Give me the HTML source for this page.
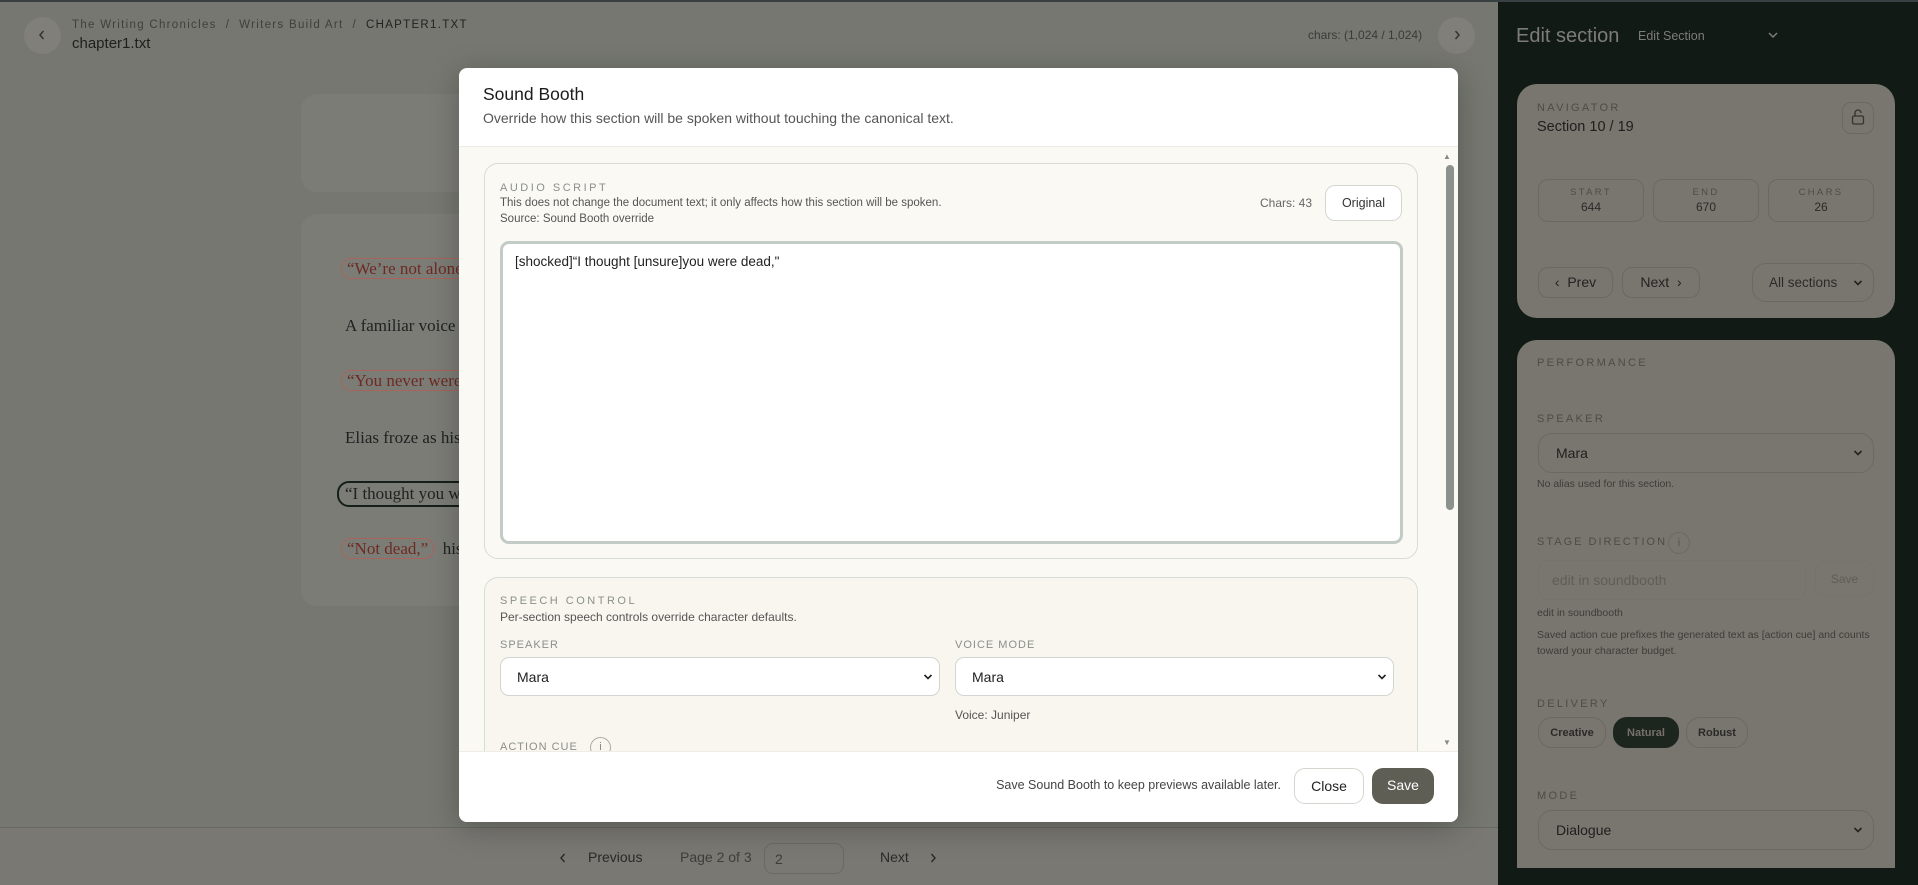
<!DOCTYPE html>
<html><head><meta charset="utf-8"><style>
*{box-sizing:border-box;margin:0;padding:0}
body{width:1918px;height:885px;overflow:hidden;background:#757770;font-family:"Liberation Sans",sans-serif;position:relative;color:#222}
.a{position:absolute;white-space:nowrap}
.lbl{font-size:11px;letter-spacing:2.5px;color:#8a8f8c;text-transform:uppercase}
.sl{font-size:11px;letter-spacing:2.3px;color:#4e4c48;text-transform:uppercase}
.serif{font-family:"Liberation Serif",serif;font-size:17px;color:#1e211f}
.pill{border:1px solid #a8645a;border-radius:10px;padding:0 5px;color:#6e2a22}
.sbox{border:1px solid #6b6963;border-radius:10px;text-align:center}
.sel{border:1px solid #6b6963;border-radius:14px}
.chev{position:absolute;right:10px;top:50%;margin-top:-4px}
</style></head><body>
<div class="a" style="left:0;top:0;width:1918px;height:2px;background:#394041"></div>
<div class="a" style="left:24px;top:17px;width:37px;height:37px;border-radius:50%;background:#807f79"></div>
<svg class="a" style="left:37px;top:29px" width="10" height="12" viewBox="0 0 10 12"><path d="M6.5 2L3 6l3.5 4" fill="none" stroke="#333" stroke-width="1.5"/></svg>
<div class="a" style="left:72px;top:19px;font-size:11.5px;letter-spacing:1.3px;color:#3e403c">The Writing Chronicles &nbsp;/ &nbsp;Writers Build Art &nbsp;/ &nbsp;<span style="color:#222">CHAPTER1.TXT</span></div>
<div class="a" style="left:72px;top:35px;font-size:15px;color:#1e1f1c">chapter1.txt</div>
<div class="a" style="left:1308px;top:28px;font-size:12px;color:#3a3b38">chars: (1,024 / 1,024)</div>
<div class="a" style="left:1438px;top:17px;width:37px;height:37px;border-radius:50%;background:#807f79"></div>
<svg class="a" style="left:1452px;top:29px" width="10" height="12" viewBox="0 0 10 12"><path d="M3.5 2L7 6l-3.5 4" fill="none" stroke="#333" stroke-width="1.5"/></svg>
<div class="a" style="left:301px;top:94px;width:600px;height:98px;border-radius:16px;background:#7c7c77"></div>
<div class="a" style="left:301px;top:214px;width:600px;height:392px;border-radius:16px;background:#7c7c77"></div>
<div class="a serif" style="left:341px;top:259px"><span class="pill">“We’re not alone,</span></div>
<div class="a serif" style="left:345px;top:316px">A familiar voice a</div>
<div class="a serif" style="left:341px;top:371px"><span class="pill">“You never were.</span></div>
<div class="a serif" style="left:345px;top:428px">Elias froze as his</div>
<div class="a serif" style="left:337px;top:481px;border:2px solid #15201a;border-radius:12px;padding:1px 6px">“I thought you we</div>
<div class="a serif" style="left:341px;top:539px"><span class="pill">“Not dead,”</span>&nbsp; his</div>
<div class="a" style="left:0;top:827px;width:1498px;height:58px;background:#7a7873;border-top:1px solid #676962"></div>
<svg class="a" style="left:558px;top:852px" width="10" height="12" viewBox="0 0 10 12"><path d="M6.5 2L3 6l3.5 4" fill="none" stroke="#2a2a28" stroke-width="1.4"/></svg>
<div class="a" style="left:588px;top:849px;font-size:14px;color:#2a2a28">Previous</div>
<div class="a" style="left:680px;top:849px;font-size:14px;color:#3d3d3a">Page 2 of 3</div>
<div class="a" style="left:764px;top:843px;width:80px;height:31px;border:1px solid #6b6963;border-radius:9px;padding:7px 10px;font-size:14px;color:#3d3d3a">2</div>
<div class="a" style="left:880px;top:849px;font-size:14px;color:#2a2a28">Next</div>
<svg class="a" style="left:928px;top:852px" width="10" height="12" viewBox="0 0 10 12"><path d="M3.5 2L7 6l-3.5 4" fill="none" stroke="#2a2a28" stroke-width="1.4"/></svg>
<!-- sidebar -->
<div class="a" style="left:1498px;top:2px;width:420px;height:883px;background:#111a14"></div>
<div class="a" style="left:1516px;top:25px;font-size:20px;color:#7d7c77">Edit section</div>
<div class="a" style="left:1638px;top:29px;font-size:12.5px;color:#7d7c77">Edit Section</div>
<svg class="a" style="left:1767px;top:31px" width="12" height="8" viewBox="0 0 12 8"><path d="M2 2l4 4 4-4" fill="none" stroke="#7d7c77" stroke-width="1.5"/></svg>
<div class="a" style="left:1517px;top:84px;width:378px;height:234px;border-radius:20px;background:#797670"></div>
<div class="a sl" style="left:1537px;top:102px">Navigator</div>
<div class="a" style="left:1537px;top:119px;font-size:14.5px;color:#1e1e1c">Section 10 / 19</div>
<div class="a" style="left:1842px;top:102px;width:32px;height:32px;border:1px solid #6b6963;border-radius:9px"></div>
<svg class="a" style="left:1850px;top:108px" width="16" height="18" viewBox="0 0 16 18"><rect x="2.5" y="8" width="11" height="8" rx="1.5" fill="none" stroke="#333" stroke-width="1.3"/><path d="M5 8V5a3 3 0 0 1 6 0" fill="none" stroke="#333" stroke-width="1.3"/></svg>
<div class="a sbox" style="left:1538px;top:179px;width:106px;height:43px"><div class="sl" style="font-size:9.5px;margin-top:7px">Start</div><div style="font-size:12px;color:#2a2a28;margin-top:2px">644</div></div>
<div class="a sbox" style="left:1653px;top:179px;width:106px;height:43px"><div class="sl" style="font-size:9.5px;margin-top:7px">End</div><div style="font-size:12px;color:#2a2a28;margin-top:2px">670</div></div>
<div class="a sbox" style="left:1768px;top:179px;width:106px;height:43px"><div class="sl" style="font-size:9.5px;margin-top:7px">Chars</div><div style="font-size:12px;color:#2a2a28;margin-top:2px">26</div></div>
<div class="a sbox" style="left:1538px;top:267px;width:75px;height:31px;font-size:14px;padding-top:6px;color:#222">‹ &nbsp;Prev</div>
<div class="a sbox" style="left:1622px;top:267px;width:78px;height:31px;font-size:14px;padding-top:6px;color:#222">Next &nbsp;›</div>
<div class="a sel" style="left:1752px;top:263px;width:122px;height:39px;font-size:13.5px;padding:11px 0 0 16px;color:#2a2a28">All sections<svg class="chev" width="10" height="8" viewBox="0 0 10 8"><path d="M1.5 2l3.5 3.5L8.5 2" fill="none" stroke="#222" stroke-width="1.6"/></svg></div>
<div class="a" style="left:1517px;top:340px;width:378px;height:528px;border-radius:20px 20px 0 0;background:#797670"></div>
<div class="a sl" style="left:1537px;top:357px">Performance</div>
<div class="a sl" style="left:1537px;top:413px">Speaker</div>
<div class="a sel" style="left:1538px;top:433px;width:336px;height:40px;font-size:14px;padding:11px 0 0 17px;color:#1e1e1c">Mara<svg class="chev" width="10" height="8" viewBox="0 0 10 8"><path d="M1.5 2l3.5 3.5L8.5 2" fill="none" stroke="#222" stroke-width="1.6"/></svg></div>
<div class="a" style="left:1537px;top:478px;font-size:10.5px;color:#3d3c39">No alias used for this section.</div>
<div class="a sl" style="left:1537px;top:536px;letter-spacing:2px">Stage Direction</div>
<div class="a" style="left:1668px;top:532px;width:22px;height:22px;border:1px solid #6b6963;border-radius:50%;font-size:11px;text-align:center;line-height:20px;color:#555">i</div>
<div class="a" style="left:1538px;top:560px;width:268px;height:40px;border:1px solid #75736d;border-radius:10px;font-size:14px;padding:11px 13px;color:#5f5d58">edit in soundbooth</div>
<div class="a" style="left:1815px;top:561px;width:59px;height:35px;border:1px solid #75736d;border-radius:10px;font-size:12px;text-align:center;padding-top:10px;color:#5f5d58">Save</div>
<div class="a" style="left:1537px;top:607px;font-size:10.5px;color:#3d3c39">edit in soundbooth</div>
<div class="a" style="left:1537px;top:627px;font-size:10.5px;line-height:16px;color:#3d3c39;width:340px;white-space:normal">Saved action cue prefixes the generated text as [action cue] and counts toward your character budget.</div>
<div class="a sl" style="left:1537px;top:698px">Delivery</div>
<div class="a sbox" style="left:1538px;top:717px;width:68px;height:31px;border-radius:14px;font-size:11px;font-weight:bold;padding-top:9px;color:#2a2a28">Creative</div>
<div class="a sbox" style="left:1613px;top:717px;width:66px;height:31px;border-radius:14px;font-size:11px;font-weight:bold;padding-top:9px;color:#77706a;background:#1c261f;border-color:#1c261f">Natural</div>
<div class="a sbox" style="left:1686px;top:717px;width:62px;height:31px;border-radius:14px;font-size:11px;font-weight:bold;padding-top:9px;color:#2a2a28">Robust</div>
<div class="a sl" style="left:1537px;top:790px">Mode</div>
<div class="a sel" style="left:1538px;top:810px;width:336px;height:40px;font-size:14px;padding:11px 0 0 17px;color:#1e1e1c">Dialogue<svg class="chev" width="10" height="8" viewBox="0 0 10 8"><path d="M1.5 2l3.5 3.5L8.5 2" fill="none" stroke="#222" stroke-width="1.6"/></svg></div>
<!-- modal -->
<div class="a" style="left:459px;top:68px;width:999px;height:754px;background:#fff;border-radius:8px;box-shadow:0 6px 30px rgba(0,0,0,.25);overflow:hidden">
 <div class="a" style="left:24px;top:16px;font-size:17.5px;color:#1c1c1c">Sound Booth</div>
 <div class="a" style="left:24px;top:42px;font-size:14px;color:#555">Override how this section will be spoken without touching the canonical text.</div>
 <div class="a" style="left:0;top:78px;width:999px;height:605px;background:#fbf9f4;border-top:1px solid #efece4"></div>
 <div class="a" style="left:984px;top:84px;font-size:8px;color:#888">▲</div>
 <div class="a" style="left:987px;top:97px;width:8px;height:345px;border-radius:4px;background:#8b918c"></div>
 <div class="a" style="left:984px;top:670px;font-size:8px;color:#888">▼</div>
 <div class="a" style="left:25px;top:95px;width:934px;height:396px;border:1px solid #d7dcd6;border-radius:14px;background:#fbf9f4"></div>
 <div class="a lbl" style="left:41px;top:114px">Audio Script</div>
 <div class="a" style="left:41px;top:129px;font-size:11.5px;color:#555">This does not change the document text; it only affects how this section will be spoken.</div>
 <div class="a" style="left:41px;top:145px;font-size:11.5px;color:#555">Source: Sound Booth override</div>
 <div class="a" style="left:801px;top:128px;font-size:12px;color:#666">Chars: 43</div>
 <div class="a" style="left:866px;top:117px;width:77px;height:36px;border:1px solid #d3d7d0;border-radius:10px;background:#fff;font-size:12.5px;text-align:center;padding-top:10px;color:#333">Original</div>
 <div class="a" style="left:41px;top:173px;width:903px;height:303px;border:3px solid #c3cbc6;border-radius:9px;background:#fff;font-size:13.5px;padding:10px 12px;color:#222">[shocked]“I thought [unsure]you were dead,"</div>
 <div class="a" style="left:25px;top:509px;width:934px;height:200px;border:1px solid #d7dcd6;border-radius:14px;background:#f9f6ef"></div>
 <div class="a lbl" style="left:41px;top:527px">Speech Control</div>
 <div class="a" style="left:41px;top:542px;font-size:12px;color:#555">Per-section speech controls override character defaults.</div>
 <div class="a lbl" style="left:41px;top:571px;letter-spacing:1px">Speaker</div>
 <div class="a" style="left:41px;top:589px;width:440px;height:39px;border:1px solid #d2d6d0;border-radius:9px;background:#fff;font-size:14px;padding:11px 16px;color:#222">Mara<svg class="chev" style="right:6px" width="10" height="8" viewBox="0 0 10 8"><path d="M1.5 2l3.5 3.5L8.5 2" fill="none" stroke="#222" stroke-width="1.6"/></svg></div>
 <div class="a lbl" style="left:496px;top:571px;letter-spacing:1px">Voice Mode</div>
 <div class="a" style="left:496px;top:589px;width:439px;height:39px;border:1px solid #d2d6d0;border-radius:9px;background:#fff;font-size:14px;padding:11px 16px;color:#222">Mara<svg class="chev" style="right:6px" width="10" height="8" viewBox="0 0 10 8"><path d="M1.5 2l3.5 3.5L8.5 2" fill="none" stroke="#222" stroke-width="1.6"/></svg></div>
 <div class="a" style="left:496px;top:640px;font-size:12px;color:#555">Voice: Juniper</div>
 <div class="a lbl" style="left:41px;top:673px;letter-spacing:1px">Action Cue</div>
 <div class="a" style="left:131px;top:669px;width:21px;height:21px;border:1px solid #aaa;border-radius:50%;font-size:11px;text-align:center;line-height:19px;color:#888">i</div>
 <div class="a" style="left:0;top:683px;width:999px;height:71px;background:#fff;border-top:1px solid #efece4"></div>
 <div class="a" style="left:480px;top:710px;width:342px;text-align:right;font-size:12.5px;color:#444">Save Sound Booth to keep previews available later.</div>
 <div class="a" style="left:835px;top:700px;width:70px;height:36px;border:1px solid #d3d7d0;border-radius:11px;font-size:14px;text-align:center;padding-top:9px;color:#222">Close</div>
 <div class="a" style="left:913px;top:700px;width:62px;height:36px;border-radius:11px;background:#5f5e54;font-size:14px;text-align:center;padding-top:9px;color:#fff">Save</div>
</div>
</body></html>
